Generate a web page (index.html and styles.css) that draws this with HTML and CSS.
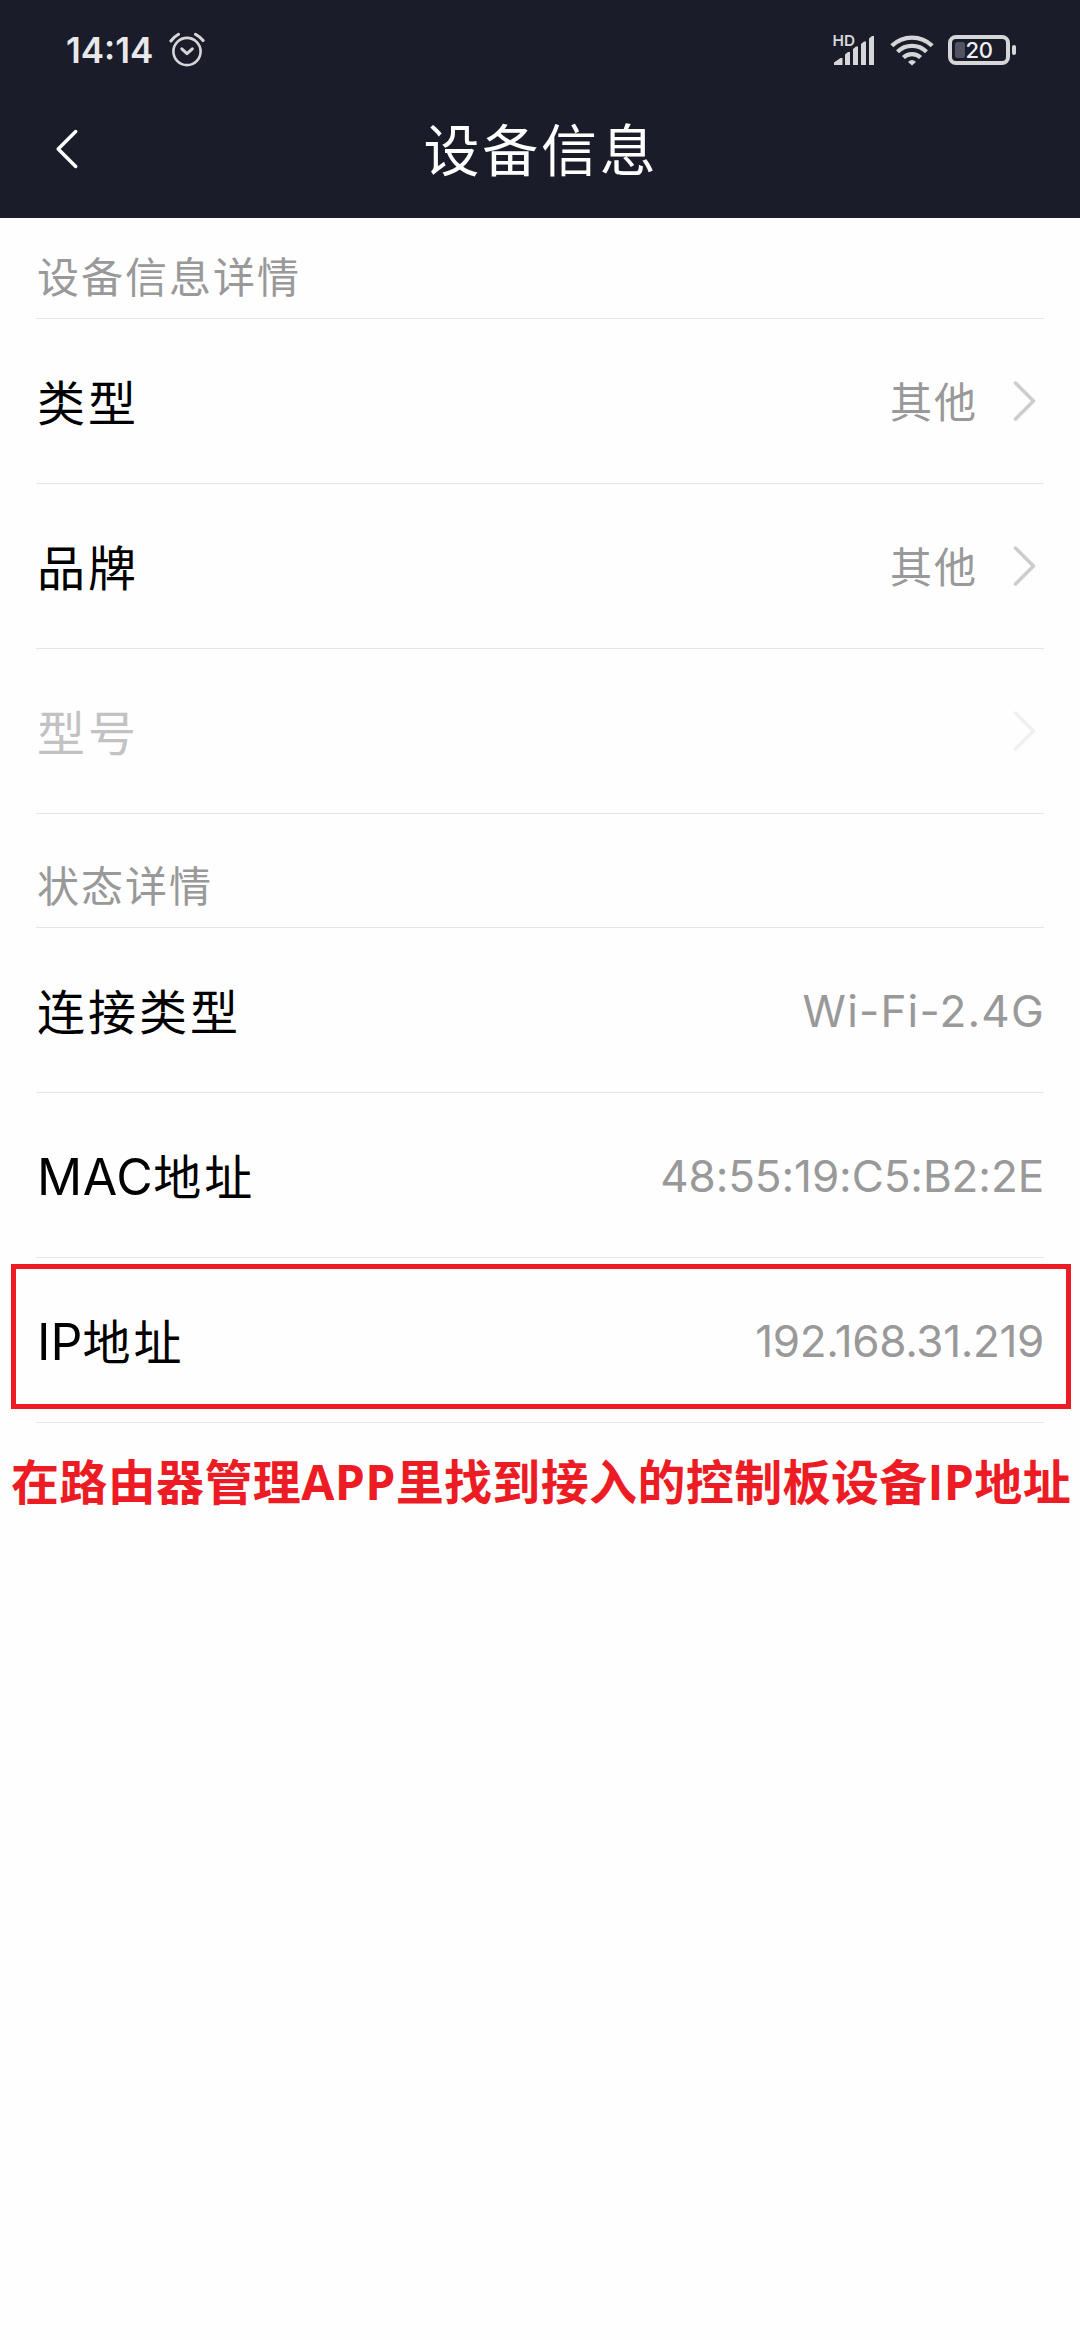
FILE: index.html
```html
<!DOCTYPE html>
<html lang="zh-CN">
<head>
<meta charset="utf-8">
<title>设备信息</title>
<link rel="stylesheet" href="styles.css">
</head>
<body>
<header class="header">
  <div class="status">
    <div class="status-left">
      <span class="clock">14:14</span>
      <svg class="alarm" width="36" height="36" viewBox="0 0 36 36" fill="none" stroke="#d6d6d9" stroke-linecap="round" stroke-linejoin="round">
        <circle cx="18" cy="19.5" r="13.6" stroke-width="2.6"/>
        <path d="M12.8 16.8L18 21.6L23.3 16.8" stroke-width="3"/>
        <path d="M1.9 9Q5 4.800 9.500 2.300M26.500 2.300Q31 4.800 34.100 8.500" stroke-width="3"/>
      </svg>
    </div>
    <div class="status-right">
      <svg class="signal" width="44" height="34" viewBox="0 0 44 34" fill="#d6d6d9">
        <text class="hd" x="0.500" y="13" textLength="22.500" lengthAdjust="spacingAndGlyphs">HD</text>
        <path d="M2 32V29.500L8.500 25H10.500V32zM13 32V21.500L16 19H18V32zM21 32V16L24 13.500H26V32zM29 32V11L32 8.500H34V32zM37 32V5.500L40 3H42V32z"/>
      </svg>
      <svg class="wifi" width="44" height="34" viewBox="0 0 44 34" fill="none" stroke="#d6d6d9" stroke-width="4.200">
        <path d="M1.800 12.800A29 29 0 0 1 42.200 12.800M7.500 18.700A20.800 20.800 0 0 1 36.500 18.700M13.400 24.500A12.500 12.500 0 0 1 30.600 24.500"/>
        <path d="M18 29Q22 25 26 29L22 32.500z" fill="#d6d6d9" stroke="none"/>
      </svg>
      <svg class="battery" width="70" height="34" viewBox="0 0 70 34">
        <rect x="2" y="4" width="58" height="26" rx="6" fill="none" stroke="#d6d6d9" stroke-width="4"/>
        <rect x="7" y="9" width="10" height="16" rx="2.500" fill="#525260"/>
        <rect x="64" y="12" width="4" height="10" rx="2" fill="#d6d6d9"/>
        <text class="level" x="17.500" y="25" textLength="27.500">20</text>
      </svg>
    </div>
  </div>
  <div class="titlebar">
    <svg class="back" width="24" height="42" viewBox="0 0 24 42" fill="none" stroke="#fff" stroke-width="3.500" stroke-linecap="round" stroke-linejoin="round"><path d="M20.700 3.500L3.200 21L20.700 38.500"/></svg>
    <h1 class="title">设备信息</h1>
  </div>
</header>
<main class="content">
  <h2 class="section">设备信息详情</h2>
  <div class="row">
    <span class="label">类型</span>
    <span class="value cjk">其他</span>
    <svg class="chevron" width="24" height="42" viewBox="0 0 24 42"><path d="M2.500 3L20.500 21L2.500 39"/></svg>
  </div>
  <div class="row">
    <span class="label">品牌</span>
    <span class="value cjk">其他</span>
    <svg class="chevron" width="24" height="42" viewBox="0 0 24 42"><path d="M2.500 3L20.500 21L2.500 39"/></svg>
  </div>
  <div class="row disabled">
    <span class="label">型号</span>
    <svg class="chevron" width="24" height="42" viewBox="0 0 24 42"><path d="M2.500 3L20.500 21L2.500 39"/></svg>
  </div>
  <h2 class="section section-status">状态详情</h2>
  <div class="row">
    <span class="label">连接类型</span>
    <span class="value net">Wi-Fi-2.4G</span>
  </div>
  <div class="row">
    <span class="label"><span class="latin-mac">MAC</span>地址</span>
    <span class="value mac">48:55:19:C5:B2:2E</span>
  </div>
  <div class="row highlighted">
    <span class="label"><span class="latin-ip">IP</span>地址</span>
    <span class="value ip">192.168.31.219</span>
  </div>
</main>
<p class="caption">在路由器管理APP里找到接入的控制板设备IP地址</p>
</body>
</html>
```
FILE: styles.css
```css
*, *::after { box-sizing: border-box; }

body {
  margin: 0;
  width: 1080px;
  min-height: 2340px;
  background: #fefefe;
  color: #000;
  font-family: Inter, "Noto Sans CJK SC", sans-serif;
}

.header {
  height: 218px;
  background: #1b1c2a;
  color: #fff;
}

.status {
  height: 100px;
  padding: 0 62px 0 66px;
  display: flex;
  align-items: center;
  justify-content: space-between;
}

.status-left, .status-right { display: flex; align-items: center; }

.clock {
  font-size: 35px;
  font-weight: 600;
  color: #e8e8ea;
  line-height: 40px;
}

.alarm { margin-left: 16px; }
.signal { overflow: visible; }
.wifi { margin-left: 14px; }
.battery { margin-left: 14px; }
.hd { font-size: 15px; font-weight: 600; }
.level { font-size: 22px; font-weight: 500; fill: #f0f0f2; }

.titlebar {
  height: 118px;
  display: grid;
  grid-template-columns: 120px 1fr 120px;
}

.back { margin: 28px 0 0 55px; }

.title {
  margin: 0;
  padding: 1px 0 0 2px;
  font-size: 56px;
  line-height: 100px;
  font-weight: 400;
  letter-spacing: 2.8px;
  text-align: center;
}

.content { padding: 0 36px; }

.section {
  margin: 0;
  height: 101px;
  padding: 25px 0 0 1px;
  border-bottom: 1px solid #e5e5e5;
  font-size: 42px;
  line-height: 70px;
  font-weight: 400;
  letter-spacing: 2px;
  color: #999;
}

.section-status { height: 114px; padding-top: 38px; }

.row {
  position: relative;
  height: 165px;
  border-bottom: 1px solid #e5e5e5;
  display: flex;
  align-items: center;
}

.label {
  flex: 1;
  padding: 5px 0 0 1px;
  font-size: 48px;
  line-height: 70px;
  letter-spacing: 3px;
}

.latin-mac, .latin-ip { font-size: 50px; }
.latin-mac { letter-spacing: 0.6px; }
.latin-ip { letter-spacing: 0; }

.value {
  padding-top: 1px;
  font-size: 44px;
  line-height: 60px;
  color: #999;
}

.cjk { font-size: 42px; letter-spacing: 2px; padding-top: 4px; }
.net { letter-spacing: 1.2px; margin-right: -1px; }
.mac { letter-spacing: -0.1px; }
.ip { letter-spacing: -0.35px; }

.chevron {
  margin: 0 7px 0 35px;
  fill: none;
  stroke: #ccc;
  stroke-width: 3.5px;
  stroke-linecap: round;
  stroke-linejoin: round;
}

.disabled .label { color: #c2c2c2; }
.disabled .chevron { stroke: #f0f0f0; }

/* Marker frame drawn over the row and its dividers */
.highlighted::after {
  content: "";
  position: absolute;
  left: -25px;
  top: 6px;
  width: 1060px;
  height: 145px;
  border: 5px solid #ed1c24;
}

.caption {
  margin: 24px 0 0 11px;
  font-family: "Open Sans", "Noto Sans CJK SC", sans-serif;
  font-size: 48px;
  line-height: 70px;
  font-weight: 700;
  letter-spacing: 0.36px;
  color: #ed1c24;
  white-space: nowrap;
}
```
